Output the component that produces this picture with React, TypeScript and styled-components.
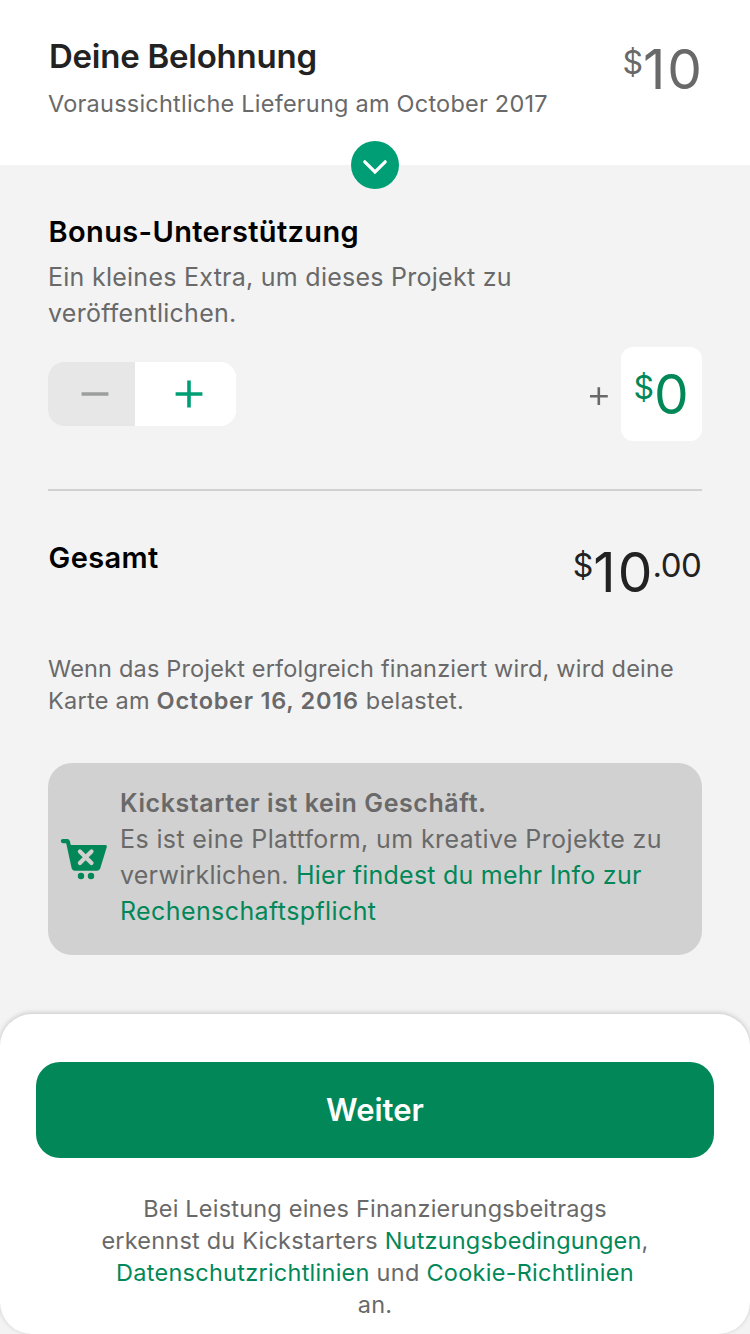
import React from 'react';
import styled, { createGlobalStyle } from 'styled-components';

const color = {
  green: '#028858',
  mint: '#009e74',
  ink: '#222222',
  muted: '#696969',
  line: '#d1d1d1',
  page: '#f3f3f3',
};

const GlobalStyle = createGlobalStyle`
  *, *::before, *::after { box-sizing: border-box; }
  body {
    margin: 0;
    background: ${color.page};
    font-family: Inter, 'Liberation Sans', sans-serif;
    color: ${color.muted};
  }
`;

const Screen = styled.div`
  width: 750px;
  height: 1334px;
  display: flex;
  flex-direction: column;
  overflow: hidden;
  background: ${color.page};
`;

const Header = styled.header`
  position: relative;
  display: flex;
  justify-content: space-between;
  align-items: flex-start;
  height: 165px;
  padding: 36px 48px 0;
  background: #fff;
`;

const Title = styled.h1`
  margin: 0 0 12px;
  padding-left: 1px;
  font-size: 33px;
  font-weight: 600;
  line-height: 40px;
  letter-spacing: -0.24px;
  color: ${color.ink};
`;

const ExpandButton = styled.button`
  position: absolute;
  left: 50%;
  bottom: -24px;
  width: 48px;
  height: 48px;
  margin-left: -24px;
  padding: 0;
  border: 0;
  border-radius: 50%;
  background: ${color.mint};
  svg { display: block; }
`;

const Line = styled.span<{ $tracking?: number }>`
  display: block;
  white-space: nowrap;
  letter-spacing: ${(p) => p.$tracking ?? 0.2}px;
`;

const Caption = styled.p<{ $centered?: boolean }>`
  margin: 0;
  font-size: 23.5px;
  line-height: 32px;
  text-align: ${(p) => (p.$centered ? 'center' : 'left')};
`;

const Body = styled.p`
  margin: 0;
  font-size: 25px;
  line-height: 36px;
`;

const Strong = styled.strong`
  font-weight: 600;
  letter-spacing: 0.74px;
`;

const Tail = styled.span`
  letter-spacing: 0.4px;
`;

const Link = styled.a`
  color: ${color.green};
`;

const Content = styled.main`
  display: flex;
  flex-direction: column;
  flex: none;
  height: 849px;
  padding: 49px 48px 0;
`;

const SectionTitle = styled.h2`
  margin: 0;
  padding-left: 0.6px;
  font-size: 29px;
  font-weight: 600;
  line-height: 36px;
  letter-spacing: 0.36px;
  color: #000;
`;

const BonusText = styled(Body)`
  margin-top: 9px;
`;

const BonusRow = styled.div`
  display: flex;
  align-items: center;
  justify-content: space-between;
  height: 94px;
  margin-top: 16px;
`;

const Stepper = styled.div`
  display: flex;
  width: 188px;
  height: 64px;
  border-radius: 16px;
  overflow: hidden;
  background: #fff;
`;

const StepButton = styled.button<{ $off?: boolean }>`
  display: flex;
  align-items: center;
  flex: ${(p) => (p.$off ? '0 0 87px' : '1')};
  padding: 0 0 0 ${(p) => (p.$off ? 33 : 40)}px;
  border: 0;
  background: ${(p) => (p.$off ? '#e7e7e7' : '#fff')};
`;

const BonusAmount = styled.div`
  display: flex;
  align-items: center;
  gap: 12px;
`;

const AmountBox = styled.div`
  display: flex;
  align-items: center;
  justify-content: center;
  width: 81px;
  height: 94px;
  padding-right: 1px;
  border-radius: 12px;
  background: #fff;
`;

const Money = styled.div<{ $color: string }>`
  height: 66px;
  font-size: 55px;
  line-height: 66px;
  white-space: nowrap;
  color: ${(p) => p.$color};
`;

const Currency = styled.span`
  font-size: 32px;
  line-height: 0;
  vertical-align: 15px;
`;

const Digits = styled.span`
  margin-right: -2px;
  letter-spacing: 2px;
`;

const Cents = styled.span`
  font-size: 33px;
  line-height: 0;
  letter-spacing: -0.4px;
  vertical-align: 15px;
`;

const Divider = styled.hr`
  width: 100%;
  height: 2px;
  margin: 48px 0 0;
  border: 0;
  background: ${color.line};
`;

const TotalRow = styled.div`
  display: flex;
  justify-content: space-between;
  align-items: flex-start;
  height: 114px;
  margin: 48px 0 0;
  padding-right: 0.5px;
  & > h2 { margin-top: 1px; }
`;

const Notice = styled.section`
  display: flex;
  align-items: center;
  gap: 12px;
  height: 192px;
  margin-top: 46px;
  padding: 0 12px;
  border-radius: 24px;
  background: ${color.line};
`;

const NoticeText = styled(Body)`
  margin-top: -4px;
`;

const NoticeTitle = styled(Line)`
  font-weight: 600;
`;

const Sheet = styled.footer`
  display: flex;
  flex-direction: column;
  flex: none;
  height: 320px;
  padding: 48px 36px 0;
  border-radius: 32px;
  background: #fff;
  box-shadow: 0 -1px 5px rgba(0, 0, 0, 0.19);
`;

const ContinueButton = styled.button`
  height: 96px;
  margin: 0 0 35px;
  padding: 0;
  border: 0;
  border-radius: 24px;
  background: ${color.green};
  color: #fff;
  font: 600 31px/96px Inter, 'Liberation Sans', sans-serif;
`;

function Price({ value, cents, tone }: { value: string; cents?: string; tone: string }) {
  return (
    <Money $color={tone}>
      <Currency>$</Currency>
      <Digits>{value}</Digits>
      {cents && <Cents>{cents}</Cents>}
    </Money>
  );
}

function CartIcon() {
  return (
    <svg width="48" height="48" viewBox="0 0 48 48" fill={color.green}>
      <path d="M2.8 4 H7.4 Q9.2 4 9.7 5.8 L10.8 10 H45.3 Q47.4 10 46.8 12 L40.2 33.6 Q39.4 35.7 37.4 35.7 H14.4 Q12.3 35.7 11.7 33.6 L6.2 8.2 H2.8 Q.8 8.2 .8 6.1 T2.8 4 Z" />
      <path d="M19.9 16.5 L31.5 28.1 M31.5 16.5 L19.9 28.1" stroke={color.line} strokeWidth="4.2" strokeLinecap="round" />
      <circle cx="21" cy="41" r="3.2" />
      <circle cx="31" cy="41" r="3.2" />
    </svg>
  );
}

export default function App() {
  return (
    <Screen>
      <GlobalStyle />
      <Header>
        <div>
          <Title>Deine Belohnung</Title>
          <Caption><Line $tracking={0.22}>Voraussichtliche Lieferung am October 2017</Line></Caption>
        </div>
        <Price value="10" tone={color.muted} />
        <ExpandButton aria-label="Details">
          <svg width="48" height="48" viewBox="0 0 48 48" fill="none" stroke="#fff" strokeWidth="3.2" strokeLinecap="round">
            <path d="M13.8 20.8 L24 31 L34.2 20.8" />
          </svg>
        </ExpandButton>
      </Header>

      <Content>
        <SectionTitle>Bonus-Unterstützung</SectionTitle>
        <BonusText>
          <Line $tracking={0.26}>Ein kleines Extra, um dieses Projekt zu</Line>
          <Line $tracking={0.27}>veröffentlichen.</Line>
        </BonusText>
        <BonusRow>
          <Stepper>
            <StepButton $off aria-label="Weniger">
              <svg width="28" height="28" viewBox="0 0 28 28" stroke="#9a9f9d" strokeWidth="3.6">
                <path d="M.6 14 H27.4" />
              </svg>
            </StepButton>
            <StepButton aria-label="Mehr">
              <svg width="28" height="28" viewBox="0 0 28 28" stroke={color.mint} strokeWidth="3.6">
                <path d="M.6 14 H27.4 M14 .6 V27.4" />
              </svg>
            </StepButton>
          </Stepper>
          <BonusAmount>
            <svg width="20" height="24" viewBox="0 0 20 24" stroke={color.muted} strokeWidth="2.6">
              <path d="M1 14.2 H18.8 M9.8 5.3 V23.1" />
            </svg>
            <AmountBox><Price value="0" tone={color.green} /></AmountBox>
          </BonusAmount>
        </BonusRow>
        <Divider />
        <TotalRow>
          <SectionTitle>Gesamt</SectionTitle>
          <Price value="10" cents=".00" tone={color.ink} />
        </TotalRow>
        <Caption>
          <Line $tracking={0.18}>Wenn das Projekt erfolgreich finanziert wird, wird deine</Line>
          <Line $tracking={0.25}>Karte am <Strong>October 16, 2016</Strong><Tail> belastet.</Tail></Line>
        </Caption>
        <Notice>
          <CartIcon />
          <NoticeText>
            <NoticeTitle $tracking={0.58}>Kickstarter ist kein Geschäft.</NoticeTitle>
            <Line $tracking={0.38}>Es ist eine Plattform, um kreative Projekte zu</Line>
            <Line $tracking={0.23}>verwirklichen. <Link>Hier findest du mehr Info zur</Link></Line>
            <Line $tracking={0.4}><Link>Rechenschaftspflicht</Link></Line>
          </NoticeText>
        </Notice>
      </Content>

      <Sheet>
        <ContinueButton>Weiter</ContinueButton>
        <Caption $centered>
          <Line>Bei Leistung eines Finanzierungsbeitrags</Line>
          <Line>erkennst du Kickstarters <Link>Nutzungsbedingungen</Link>,</Line>
          <Line $tracking={0.26}><Link>Datenschutzrichtlinien</Link> und <Link>Cookie-Richtlinien</Link></Line>
          <Line>an.</Line>
        </Caption>
      </Sheet>
    </Screen>
  );
}
